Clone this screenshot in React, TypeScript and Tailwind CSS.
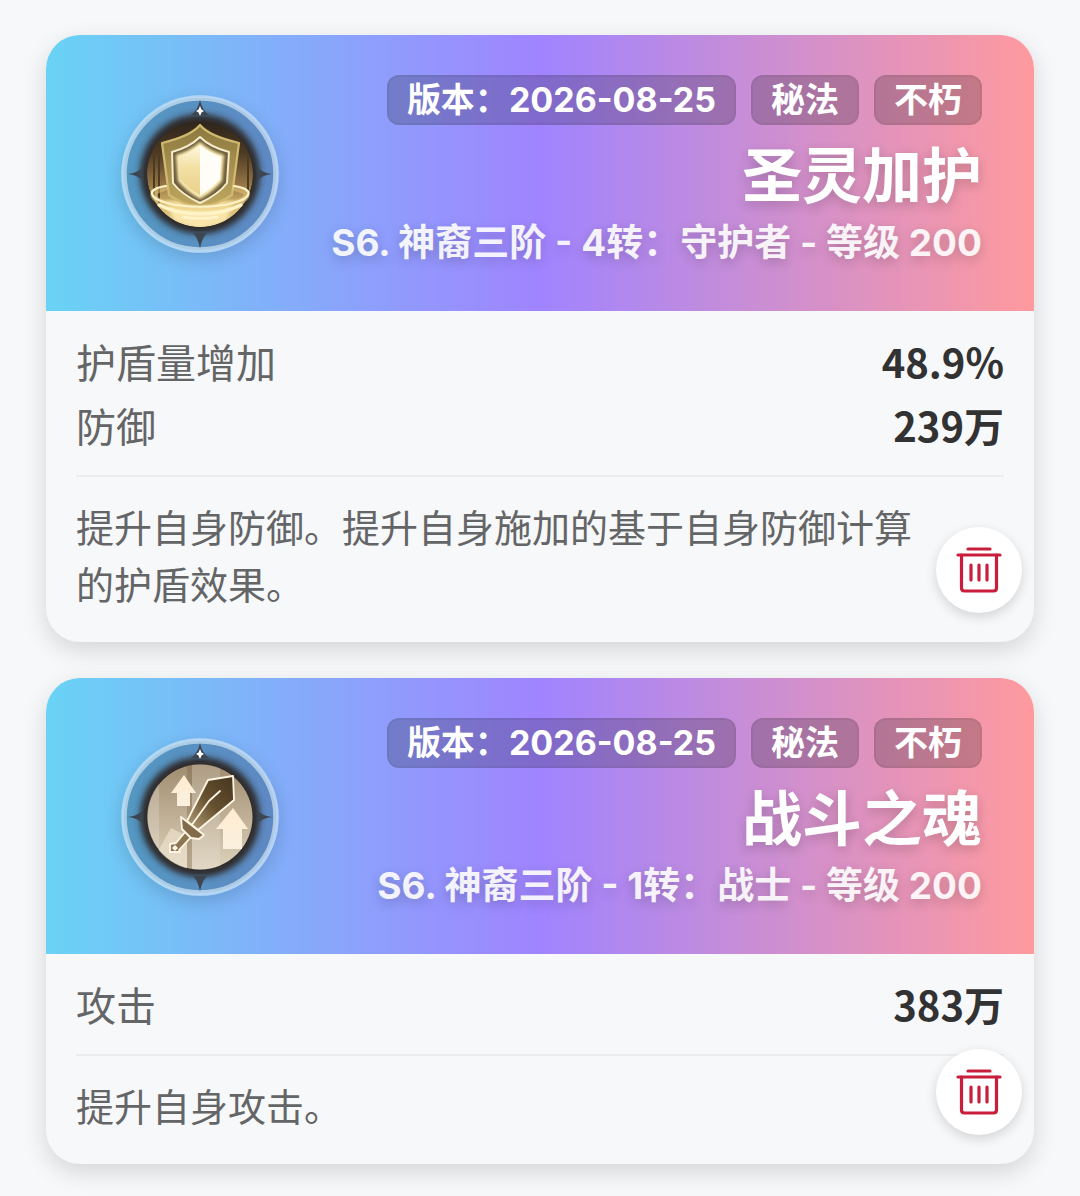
import React, { useState } from 'react';

interface Stat {
  label: string;
  value: string;
}

interface Skill {
  id: string;
  name: string;
  version: string;
  tags: string[];
  source: string;
  stats: Stat[];
  description: string;
  icon: React.ReactNode;
}

const IconFrame: React.FC<{ id: string; children: React.ReactNode }> = ({ id, children }) => (
  <svg viewBox="0 0 158 158" className="w-full h-full" aria-hidden="true">
    <defs>
      <filter id={`${id}-blur`} x="-20%" y="-20%" width="140%" height="140%">
        <feGaussianBlur stdDeviation="3" />
      </filter>
      <filter id={`${id}-glow`} x="-20%" y="-20%" width="140%" height="140%">
        <feGaussianBlur stdDeviation="1.6" />
      </filter>
      <linearGradient id={`${id}-plate`} x1="0" y1="0" x2="0" y2="1">
        <stop offset="0" stopColor="#a18d70" />
        <stop offset="1" stopColor="#ddd2bc" />
      </linearGradient>
      <linearGradient id={`${id}-gold`} x1="0" y1="0" x2="0" y2="1">
        <stop offset="0" stopColor="#2f251c" />
        <stop offset="0.3" stopColor="#4d3a22" />
        <stop offset="0.6" stopColor="#957747" />
        <stop offset="0.8" stopColor="#d4b56c" />
        <stop offset="1" stopColor="#f0da9b" />
      </linearGradient>
      <linearGradient id={`${id}-body`} x1="0" y1="0" x2="0" y2="1">
        <stop offset="0" stopColor="#8b783f" />
        <stop offset="1" stopColor="#bfa660" />
      </linearGradient>
      <linearGradient id={`${id}-half`} x1="0" y1="0" x2="0" y2="1">
        <stop offset="0" stopColor="#fff8e0" />
        <stop offset="0.45" stopColor="#f3e0a4" />
        <stop offset="1" stopColor="#ead08a" />
      </linearGradient>
      <linearGradient id={`${id}-blade`} x1="1" y1="0" x2="0" y2="1">
        <stop offset="0" stopColor="#46351f" />
        <stop offset="0.5" stopColor="#65502f" />
        <stop offset="1" stopColor="#b8a27d" />
      </linearGradient>
      <linearGradient id={`${id}-arrow`} x1="0" y1="0" x2="0" y2="1">
        <stop offset="0" stopColor="#ffecd0" />
        <stop offset="1" stopColor="#faf0df" />
      </linearGradient>
      <clipPath id={`${id}-clip`}>
        <circle cx="79" cy="79" r="53" />
      </clipPath>
    </defs>
    <circle cx="79" cy="79" r="76" fill="#1e4664" fillOpacity="0.36" />
    <circle cx="79" cy="79" r="76" fill="none" stroke="#c8dff0" strokeOpacity="0.75" strokeWidth="5.5" />
    <circle cx="79" cy="79" r="60" fill="#2f2b2a" filter={`url(#${id}-blur)`} />
    <g fill="#3d4650">
      <path d="M79 5 Q81 15 88 20 L70 20 Q77 15 79 5 Z" />
      <path d="M79 153 Q81 143 86 138 L72 138 Q77 143 79 153 Z" />
      <path d="M7 79 Q16 78 21 73 L21 85 Q16 80 7 79 Z" />
      <path d="M151 79 Q142 78 137 73 L137 85 Q142 80 151 79 Z" />
    </g>
    <path d="M79 11 L80.5 14.5 L83 16 L80.5 17.5 L79 21 L77.5 17.5 L75 16 L77.5 14.5 Z" fill="#fff" />
    {children}
  </svg>
);

const ShieldIcon: React.FC = () => (
  <IconFrame id="shield">
    <g clipPath="url(#shield-clip)">
      <circle cx="79" cy="79" r="53" fill="url(#shield-gold)" />
      <path d="M33 54 V100 M38 60 V110 M127 60 V100" stroke="#4d3a20" strokeWidth="2" />
      <path d="M44 106 H114 L104 126 L79 133 L54 126 Z" fill="#fae6ab" filter="url(#shield-glow)" />
    </g>
    <path
      d="M79 30 Q88 41 118 48 L111 100 Q96 110 79 112 Q62 110 48 100 L41 48 Q70 41 79 30 Z"
      fill="url(#shield-body)"
      stroke="#d0ba70"
      strokeWidth="2.2"
      strokeLinejoin="round"
    />
    <path
      d="M79 42 Q89 52 108 57 L106 88 Q98 99 79 108 Q60 99 52 88 L51 57 Q69 52 79 42 Z"
      fill="#6f5d39"
      stroke="#f5edcb"
      strokeWidth="2"
      strokeLinejoin="round"
    />
    <path d="M79 47 Q89 56 103 60 L101 86 Q92 97 79 104 Q66 97 57 86 L55 60 Q69 56 79 47 Z" fill="#fff0b8" filter="url(#shield-glow)" />
    <path d="M79 50 Q69 58 58 62 L59 84 Q67 94 79 100 Z" fill="url(#shield-half)" />
    <path d="M79 50 Q89 58 100 62 L99 84 Q91 94 79 100 Z" fill="#fffdf8" />
    <g fill="none" stroke="#fff3ca" strokeLinecap="round">
      <path d="M44 93 C26 97 30 105 48 109 C66 114 92 114 110 109 C128 105 132 97 114 93" stroke="#e5ca7c" strokeWidth="6" strokeOpacity="0.5" />
      <path d="M45 91 C24 94 28 103 46 108 C66 113 92 113 112 108 C131 103 134 94 113 91" strokeWidth="2.2" />
      <path d="M38 110 Q56 119 79 119 Q102 119 120 110" strokeWidth="3.2" />
      <path d="M62 122 Q79 125 96 122" strokeWidth="2.6" />
    </g>
  </IconFrame>
);

const SwordIcon: React.FC = () => (
  <IconFrame id="sword">
    <circle cx="79" cy="79" r="52.5" fill="url(#sword-plate)" />
    <g clipPath="url(#sword-clip)">
      <path d="M20 20 H38 V140 H20 Z" fill="#fff" fillOpacity="0.18" />
      <path d="M66 20 H71 V140 H66 Z" fill="#80694c" fillOpacity="0.4" />
      <path d="M71 20 H99 V140 H71 Z" fill="#fff" fillOpacity="0.14" />
      <path d="M36 115 L50 90 L66 98 L66 140 H45 Z" fill="#eee3cf" fillOpacity="0.65" />
    </g>
    <path d="M63 37 L75 55 H69 V68 H56 V55 H50 Z" fill="url(#sword-arrow)" />
    <path d="M112 70 L127 91 H121 V111 H102 V91 H95 Z" fill="url(#sword-arrow)" />
    <g stroke="#fff6e4" strokeWidth="1.8" strokeLinejoin="round" strokeLinecap="round">
      <path d="M112 38 L113 62 L77 92 L66 83 L87 42 Z" fill="url(#sword-blade)" />
      <path d="M99 53 L88 63 L70 88" fill="none" />
      <path d="M65 93 L71 98 L58 112 L59 114 H49 V106 L55 105 Z" fill="#8d7654" />
      <path d="M60 79 L83 97 L78 101 L70 100 L61 91 Z" fill="#826b4b" />
    </g>
    <path d="M54 107 L57 110 L54 113 L51 110 Z" fill="#fff6e4" />
  </IconFrame>
);

const SKILLS: Skill[] = [
  {
    id: 'holy-protection',
    name: '圣灵加护',
    version: '2026-08-25',
    tags: ['秘法', '不朽'],
    source: 'S6. 神裔三阶 - 4转：守护者 - 等级 200',
    stats: [
      { label: '护盾量增加', value: '48.9%' },
      { label: '防御', value: '239万' },
    ],
    description: '提升自身防御。提升自身施加的基于自身防御计算的护盾效果。',
    icon: <ShieldIcon />,
  },
  {
    id: 'battle-soul',
    name: '战斗之魂',
    version: '2026-08-25',
    tags: ['秘法', '不朽'],
    source: 'S6. 神裔三阶 - 1转：战士 - 等级 200',
    stats: [{ label: '攻击', value: '383万' }],
    description: '提升自身攻击。',
    icon: <SwordIcon />,
  },
];

const TrashIcon: React.FC = () => (
  <svg viewBox="0 0 48 48" className="w-12 h-12" fill="none" stroke="#c81e3c" strokeWidth="3.2" strokeLinecap="round" aria-hidden="true">
    <path d="M13 3 H35" />
    <path d="M3 9 H45" />
    <path d="M6.5 9 V42 Q6.5 45 9.5 45 H38.5 Q41.5 45 41.5 42 V9" />
    <path d="M16 19 V34 M24 19 V34 M32 19 V34" />
  </svg>
);

const Tag: React.FC<{ children: React.ReactNode }> = ({ children }) => (
  <span className="h-[50px] px-[18px] flex items-center rounded-xl border-2 border-black/5 bg-black/20 text-[34px] leading-none">
    {children}
  </span>
);

interface SkillCardProps {
  skill: Skill;
  onDelete: (id: string) => void;
}

const SkillCard: React.FC<SkillCardProps> = ({ skill, onDelete }) => {
  return (
    <article className="relative rounded-[34px] bg-[#f7f8fa] shadow-[0_8px_24px_rgba(0,0,0,0.14)]">
      {/* Header */}
      <header className="flex items-center justify-between rounded-t-[34px] bg-[linear-gradient(90deg,#69d3f5_0%,#a084ff_50%,#ff9a9e_100%)] pt-10 pb-[38px] pl-[75px] pr-[52px] font-['Inter','Noto_Sans_CJK_SC',sans-serif] font-bold text-white">
        <div className="w-[158px] h-[158px] shrink-0 rounded-full shadow-[0_6px_18px_rgba(0,0,0,0.15)]">
          {skill.icon}
        </div>
        <div className="flex flex-col items-end whitespace-nowrap">
          <div className="flex gap-[15px]">
            <Tag>版本：{skill.version}</Tag>
            {skill.tags.map((tag) => (
              <Tag key={tag}>{tag}</Tag>
            ))}
          </div>
          <h2 className="mt-[14px] text-[60px] leading-[74px] [text-shadow:0_4px_12px_rgba(0,0,0,0.2)]">{skill.name}</h2>
          <p className="text-[37px] leading-[60px] text-white/90 [text-shadow:0_4px_12px_rgba(0,0,0,0.2)]">{skill.source}</p>
        </div>
      </header>

      {/* Stats and description */}
      <div className="px-[30px] pt-[18px] pb-[31px]">
        <dl className="text-[40px] leading-[64px]">
          {skill.stats.map((stat) => (
            <div key={stat.label} className="flex justify-between">
              <dt className="text-[#646566]">{stat.label}</dt>
              <dd className="font-bold text-[#323233]">{stat.value}</dd>
            </div>
          ))}
        </dl>
        <p className="mt-[18px] border-t-2 border-[#ebedf0] pt-5 pr-20 text-[38px] leading-[57px] text-[#646566]">
          {skill.description}
        </p>
      </div>

      <button
        type="button"
        aria-label={`删除 ${skill.name}`}
        onClick={() => onDelete(skill.id)}
        className="absolute right-3 bottom-[29px] flex w-[86px] h-[86px] items-center justify-center rounded-full bg-white shadow-[0_4px_12px_rgba(0,0,0,0.15)] cursor-pointer"
      >
        <TrashIcon />
      </button>
    </article>
  );
};

const App: React.FC = () => {
  const [skills, setSkills] = useState<Skill[]>(SKILLS);

  const handleDelete = (id: string) => {
    setSkills((prev) => prev.filter((skill) => skill.id !== id));
  };

  return (
    <main className="flex min-h-screen flex-col gap-9 bg-[#f7f8fa] px-[46px] pt-[35px] pb-8 font-['Noto_Sans_CJK_SC',sans-serif]">
      {skills.map((skill) => (
        <SkillCard key={skill.id} skill={skill} onDelete={handleDelete} />
      ))}
    </main>
  );
};

export default App;
